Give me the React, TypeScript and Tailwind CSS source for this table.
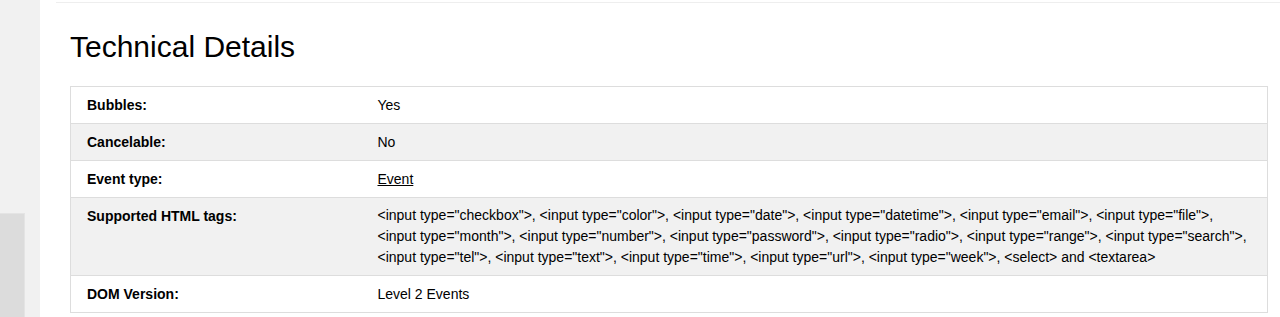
// App.tsx
const rows: { label: string; value: React.ReactNode; multi?: boolean }[] = [
  { label: 'Bubbles:', value: 'Yes' },
  { label: 'Cancelable:', value: 'No' },
  { label: 'Event type:', value: <a className="underline text-[#000]">Event</a> },
  {
    label: 'Supported HTML tags:',
    multi: true,
    value: (
      <>
        <span className="block whitespace-nowrap">
          {'<input type="checkbox">, <input type="color">, <input type="date">, <input type="datetime">, <input type="email">, <input type="file">,'}
        </span>
        <span className="block whitespace-nowrap">
          {'<input type="month">, <input type="number">, <input type="password">, <input type="radio">, <input type="range">, <input type="search">,'}
        </span>
        <span className="block whitespace-nowrap">
          {'<input type="tel">, <input type="text">, <input type="time">, <input type="url">, <input type="week">, <select> and <textarea>'}
        </span>
      </>
    ),
  },
  { label: 'DOM Version:', value: 'Level 2 Events' },
]

export default function App() {
  return (
    <div className="flex h-[317px] w-[1280px] overflow-hidden bg-white font-['Liberation_Sans',Arial,sans-serif] text-[#000]">
      {/* sidebar */}
      <div className="flex w-[40px] shrink-0 flex-col bg-[#f1f1f1]">
        <div className="h-[213px]" />
        <div className="w-[25px] flex-1 border-t border-r border-[#e4e4e4] bg-[#dcdcdc]" />
      </div>

      {/* main */}
      <div className="flex-1">
        <div className="ml-[16px] mt-[2px] h-px bg-[#eeeeee]" />
        <div className="pl-[30px] pr-[12px]">
          <h2 className="mt-[27px] mb-[22px] text-[30px] leading-[34px] font-normal">Technical Details</h2>
          <table className="w-full border-collapse border border-[#dddddd] text-[14px]">
            <tbody>
              {rows.map((r, i) => (
                <tr key={r.label} className={i % 2 === 1 ? 'bg-[#f1f1f1]' : 'bg-white'}>
                  <td className="w-[291px] border-b border-[#dddddd] px-[16px] py-[8px] align-top font-bold leading-[20px]">
                    {r.label}
                  </td>
                  <td
                    className={
                      r.multi
                        ? 'border-b border-[#dddddd] px-[16px] py-[7px] align-top leading-[21px]'
                        : 'border-b border-[#dddddd] px-[16px] py-[8px] align-top leading-[20px]'
                    }
                  >
                    {r.value}
                  </td>
                </tr>
              ))}
            </tbody>
          </table>
        </div>
      </div>
    </div>
  )
}
